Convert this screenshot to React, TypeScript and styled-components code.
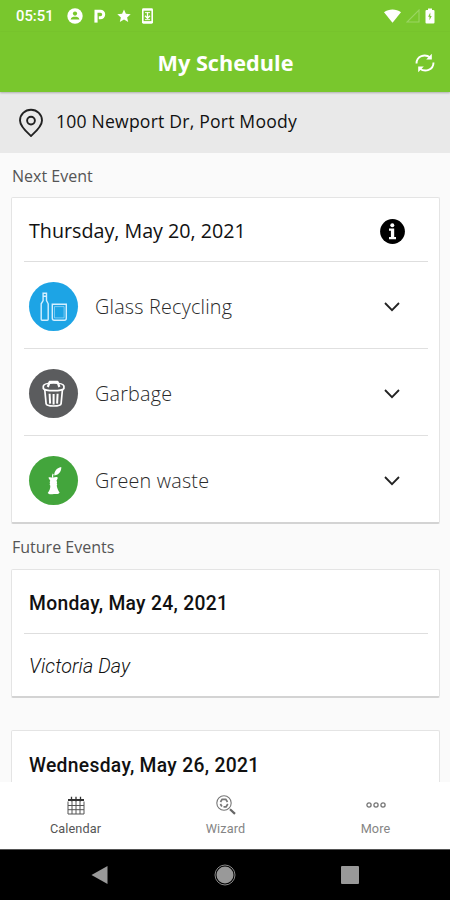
import React from 'react';
import styled, { createGlobalStyle } from 'styled-components';

const Global = createGlobalStyle`
  * { box-sizing: border-box; }
  body { margin: 0; background: #000; }
  svg { display: block; flex: none; }
`;

const openSans = '"Open Sans", "Noto Sans", sans-serif';
const roboto = 'Roboto, "Liberation Sans", sans-serif';

const Phone = styled.div`
  width: 450px;
  height: 900px;
  display: flex;
  flex-direction: column;
  overflow: hidden;
  background: #fafafa;
  font-family: ${openSans};
  color: #111;
`;

const StatusBar = styled.div`
  height: 32px;
  flex: none;
  display: flex;
  align-items: center;
  justify-content: space-between;
  padding: 0 15px 0 16px;
  background: #79c72d;
  color: #fff;
`;

const StatusGroup = styled.div<{ $gap: number }>`
  display: flex;
  align-items: center;
  gap: ${(p) => p.$gap}px;
`;

const Clock = styled.span`
  width: 40px;
  font: 500 14.8px/32px ${roboto};
  white-space: nowrap;
`;

const Header = styled.header`
  height: 60px;
  flex: none;
  display: grid;
  grid-template-columns: 50px 1fr 50px;
  align-items: center;
  background: #79c72d;
  color: #fff;
  box-shadow: 0 1px 2px rgba(0, 0, 0, 0.25);
  z-index: 1;
`;

const Title = styled.h1`
  grid-column: 2;
  margin: 0;
  padding: 1px 0 0 1px;
  text-align: center;
  font-size: 21.7px;
  line-height: 60px;
  font-weight: 700;
`;

const RefreshButton = styled.button`
  display: grid;
  place-items: center;
  height: 60px;
  padding: 0;
  border: 0;
  background: none;
  color: #fff;
`;

const AddressBar = styled.div`
  height: 61px;
  flex: none;
  display: flex;
  align-items: center;
  gap: 12px;
  padding: 0 18px;
  background: #e9e9e9;
`;

const Address = styled.span`
  font-size: 17.6px;
  letter-spacing: 0.2px;
  line-height: 24px;
  margin-top: -4px;
  white-space: nowrap;
`;

const Content = styled.main`
  flex: 1;
  min-height: 0;
  overflow: hidden;
  padding: 0 10px 0 11px;
`;

const SectionLabel = styled.h2<{ $height: number }>`
  margin: 0;
  padding-left: 1px;
  height: ${(p) => p.$height}px;
  font-size: 16px;
  line-height: 46px;
  font-weight: 400;
  color: #555;
`;

const Card = styled.section<{ $gap?: number }>`
  padding: 0 11px 0 12px;
  margin-bottom: ${(p) => p.$gap ?? 0}px;
  background: #fff;
  border: 1px solid #e4e4e4;
  border-bottom: 2px solid #d3d3d3;
  border-radius: 2px;
`;

const CardHead = styled.div<{ $offset?: number }>`
  height: 64px;
  display: flex;
  align-items: center;
  justify-content: space-between;
  padding: ${(p) => p.$offset ?? 3}px 23px 0 5px;
  border-bottom: 1px solid #dedede;
`;

const DateText = styled.span<{ $strong?: boolean }>`
  font: ${(p) => (p.$strong ? `500 19.3px/28px ${roboto}` : `400 19.7px/28px ${openSans}`)};
  letter-spacing: ${(p) => (p.$strong ? '0.3px' : '0')};
  white-space: nowrap;
`;

const WasteRow = styled.div`
  height: 87px;
  display: flex;
  align-items: center;
  padding: 3px 28px 0 5px;
  border-bottom: 1px solid #e0e0e0;
  &:last-child { height: 86px; border-bottom: 0; }
`;

const WasteBadge = styled.div<{ $color: string }>`
  width: 49px;
  height: 49px;
  border-radius: 50%;
  background: ${(p) => p.$color};
  display: grid;
  place-items: center;
  color: #fff;
`;

const WasteName = styled.span`
  flex: 1;
  padding-left: 17px;
  font-size: 19.8px;
  letter-spacing: 0.2px;
  line-height: 28px;
  font-weight: 340;
  color: #2a2a2a;
  white-space: nowrap;
`;

const Holiday = styled.div`
  height: 62px;
  padding: 3px 5px 0;
  overflow: hidden;
  font: italic 300 19.7px/60px ${roboto};
  letter-spacing: 0.1px;
`;

const TabBar = styled.nav`
  height: 67px;
  flex: none;
  display: grid;
  grid-template-columns: repeat(3, 1fr);
  background: #fff;
`;

const Tab = styled.div<{ $active?: boolean }>`
  display: flex;
  flex-direction: column;
  align-items: center;
  padding: 10px 0 0 1px;
  color: ${(p) => (p.$active ? '#555' : '#858585')};
`;

const TabIcon = styled.div`
  height: 26px;
  display: grid;
  place-items: center;
`;

const TabLabel = styled.span`
  font: 400 12.7px/22px ${roboto};
  letter-spacing: 0.1px;
`;

const SystemNav = styled.div`
  height: 51px;
  flex: none;
  display: flex;
  justify-content: space-between;
  align-items: center;
  padding: 0 91px;
  background: #000;
  border-top: 1px solid #555;
`;

const PersonIcon = () => (
  <svg width="16" height="16" viewBox="0 0 16 16">
    <circle cx="8" cy="8" r="7.7" fill="#fff" />
    <circle cx="8" cy="5.6" r="2.1" fill="#79c72d" />
    <path d="M3.6 11.4C4 9.2 6 8.7 8 8.7s4 .5 4.4 2.7z" fill="#79c72d" />
  </svg>
);

const ParkingIcon = () => (
  <svg width="12" height="16" viewBox="0 0 12 16">
    <path d="M2 14.6V7.8" stroke="#fff" strokeWidth="3.2" fill="none" />
    <path d="M2 8V3.2h4.4a3.3 3.3 0 0 1 0 6.6H4.8" stroke="#fff" strokeWidth="3" fill="none" />
  </svg>
);

const StarIcon = () => (
  <svg width="14" height="14" viewBox="0 0 14 14">
    <path d="M7 .4l1.900 4.400 4.800.400-3.600 3.200 1.100 4.700L7 10.600l-4.200 2.500 1.100-4.700L.3 5.200l4.800-.4z" fill="#fff" />
  </svg>
);

const UpdateIcon = () => (
  <svg width="11" height="16" viewBox="0 0 11 16">
    <rect x="0" y="0.3" width="11" height="15.4" rx="1.4" fill="#fff" />
    <rect x="1.6" y="2.7" width="7.8" height="10.4" fill="#79c72d" />
    <path d="M5.5 4.300v5.500M3 7.800l2.500 2.500L8 7.800" stroke="#fff" strokeWidth="1.300" fill="none" />
    <path d="M3 11.600h5M3 4.600h5" stroke="#fff" strokeWidth=".9" />
  </svg>
);

const WifiIcon = () => (
  <svg width="17" height="14" viewBox="0 0 17 14">
    <path d="M0 3.2C4.8-.4 12.2-.4 17 3.2L8.5 13.8z" fill="#fff" />
  </svg>
);

const SignalIcon = () => (
  <svg width="14" height="14" viewBox="0 0 14 14">
    <path d="M13 1v12H1z" fill="none" stroke="#9bd563" strokeWidth="1.1" />
  </svg>
);

const BatteryIcon = () => (
  <svg width="10" height="16" viewBox="0 0 10 16">
    <path d="M3 .5h4V2h1.400q1.100 0 1.100 1.100v11.300q0 1.100-1.100 1.100H1.600Q.5 15.500.5 14.400V3.100Q.5 2 1.600 2H3z" fill="#fff" />
    <path d="M5.300 4.500L3.100 8.700h1.400v3.500L6.700 7.900H5.300z" fill="#79c72d" />
  </svg>
);

const RefreshIcon = () => (
  <svg width="20" height="20" viewBox="0 0 20 20" fill="none" stroke="currentColor" strokeWidth="1.900">
    <path d="M1.500 10.500C1.500 3 10 .2 15.200 4.600" />
    <path d="M18.500 9.500C18.500 17 10 19.800 4.800 15.400" />
    <path d="M16.800.800v5.600h-5.600z" fill="currentColor" stroke="none" />
    <path d="M3.200 19.200v-5.600h5.600z" fill="currentColor" stroke="none" />
  </svg>
);

const PinIcon = () => (
  <svg width="26" height="30" viewBox="0 0 26 30" fill="none" stroke="#222" strokeWidth="1.900">
    <path d="M13 28C9.500 24.800 2 18.600 2 12.500a11 10.700 0 0 1 22 0C24 18.600 16.500 24.800 13 28z" strokeLinejoin="round" />
    <circle cx="13" cy="12.600" r="3.900" />
  </svg>
);

const InfoIcon = () => (
  <svg width="25" height="25" viewBox="0 0 25 25">
    <circle cx="12.500" cy="12.500" r="12.400" fill="#000" />
    <circle cx="12.300" cy="6.200" r="2" fill="#fff" />
    <path d="M9 9.600h5.200v8.500H16v2.200H9v-2.200h1.900v-6.300H9z" fill="#fff" />
  </svg>
);

const ChevronIcon = () => (
  <svg width="16" height="10" viewBox="0 0 16 10">
    <path d="M1 1l7 7.200L15 1" fill="none" stroke="#222" strokeWidth="1.800" />
  </svg>
);

const GlassIcon = () => (
  <svg width="49" height="49" viewBox="0 0 49 49" fill="none" stroke="#d5efff" strokeWidth="1.400">
    <path d="M14.100 11.300h3.400v7.200l1.700 3.300v15.500q0 .9-.9.900h-5.200q-.9 0-.9-.9V21.800l1.900-3.300zM14.100 14.300h3.400" />
    <path d="M23.300 22.300h14v14q0 1.900-1.900 1.900H25.200q-1.900 0-1.900-1.900z" />
    <path d="M25.500 24.600h9.600v11.300h-9.600z" strokeWidth=".5" />
  </svg>
);

const GarbageIcon = () => (
  <svg width="49" height="49" viewBox="0 0 49 49" fill="none" stroke="#fff" strokeWidth="1.700" strokeLinejoin="round">
    <path d="M14.300 17C15 14.800 19 14 24.600 14s9.600.8 10.300 3v2.500c-1 1.600-5 2.200-10.300 2.200s-9.300-.6-10.300-2.200z" />
    <path d="M15.800 21l1.300 13.600c.4 3.200 14.600 3.200 15 0L33.400 21" />
    <path d="M20.600 24.800l.5 9.800M24.600 25v10.500M28.600 24.800l-.5 9.800" strokeWidth="2" />
    <path d="M18.800 18l1.900-5.200h7.800l1.900 5.200" strokeWidth="2.200" />
  </svg>
);

const AppleCoreIcon = () => (
  <svg width="49" height="49" viewBox="0 0 49 49" fill="#fff">
    <path d="M19.500 21.600c1.500-.9 3 0 4.600-.1 1.700-.1 3.100-1 4.600.1.100 1.400-.9 2.300-1.300 3.500.9.600.9 1.500.2 2.200.7.700.8 1.500.1 2.300.500 2.800 1.400 4.900 2.900 7-1.300 2.200-3.300 1.300-5.600 1.300s-4.700 1-6.300-1c1.900-2 2.600-4.500 2.600-7.200-.800-.800-.8-1.600-.1-2.400-.700-.7-.6-1.600.1-2.300-.400-1.200-1.600-2-1.800-3.400z" />
    <path d="M23.600 21.600c-.2-1.600 0-2.700.6-3.700" stroke="#fff" strokeWidth="1.200" fill="none" />
    <path d="M25.300 19.500c-.3-4 2-7.600 7-8.600.1 4-2 7.600-7 8.600z" />
  </svg>
);

const CalendarIcon = () => (
  <svg width="18" height="19" viewBox="0 0 18 19" fill="none" stroke="#555" strokeWidth="1">
    <path d="M1 5.500v12.500h16V5.500M1 9.500h16M1 13.700h16M5 5v13M9 5v13M13 5v13" />
    <path d="M1 4h16" stroke="#333" strokeWidth="2" />
    <path d="M4.500.800v4.500M9 .8v4.500M13.500.800v4.500" stroke="#333" strokeWidth="1.300" />
  </svg>
);

const WizardIcon = () => (
  <svg width="20" height="20" viewBox="0 0 20 20" fill="none" stroke="#777" strokeWidth="1.100">
    <circle cx="8" cy="8" r="7.200" />
    <path d="M4.500 7l1.600-2.700h3.700L11.500 7M11.800 9l-1.700 2.800H7.500M5.900 11.500L4.400 9" strokeWidth="1.700" />
    <path d="M14 14.200l5 4.700" stroke="#666" strokeWidth="2.200" />
  </svg>
);

const MoreIcon = () => (
  <svg width="20" height="6" viewBox="0 0 20 6" fill="none" stroke="#777" strokeWidth="1.300">
    <circle cx="3" cy="3" r="2.100" />
    <circle cx="10" cy="3" r="2.100" />
    <circle cx="17" cy="3" r="2.100" />
  </svg>
);

const pickups = [
  { name: 'Glass Recycling', color: '#1da4e5', icon: <GlassIcon /> },
  { name: 'Garbage', color: '#5b5c5e', icon: <GarbageIcon /> },
  { name: 'Green waste', color: '#43a53c', icon: <AppleCoreIcon /> },
];

export default function App() {
  return (
    <Phone>
      <Global />
      <StatusBar>
        <StatusGroup $gap={11}>
          <Clock>05:51</Clock>
          <PersonIcon />
          <ParkingIcon />
          <StarIcon />
          <UpdateIcon />
        </StatusGroup>
        <StatusGroup $gap={5}>
          <WifiIcon />
          <SignalIcon />
          <BatteryIcon />
        </StatusGroup>
      </StatusBar>
      <Header>
        <Title>My Schedule</Title>
        <RefreshButton aria-label="Refresh"><RefreshIcon /></RefreshButton>
      </Header>
      <AddressBar>
        <PinIcon />
        <Address>100 Newport Dr, Port Moody</Address>
      </AddressBar>
      <Content>
        <SectionLabel $height={44}>Next Event</SectionLabel>
        <Card>
          <CardHead>
            <DateText>Thursday, May 20, 2021</DateText>
            <InfoIcon />
          </CardHead>
          {pickups.map((p) => (
            <WasteRow key={p.name}>
              <WasteBadge $color={p.color}>{p.icon}</WasteBadge>
              <WasteName>{p.name}</WasteName>
              <ChevronIcon />
            </WasteRow>
          ))}
        </Card>
        <SectionLabel $height={45}>Future Events</SectionLabel>
        <Card $gap={32}>
          <CardHead $offset={4}><DateText $strong>Monday, May 24, 2021</DateText></CardHead>
          <Holiday>Victoria Day</Holiday>
        </Card>
        <Card>
          <CardHead $offset={7}><DateText $strong>Wednesday, May 26, 2021</DateText></CardHead>
        </Card>
      </Content>
      <TabBar>
        <Tab $active><TabIcon><CalendarIcon /></TabIcon><TabLabel>Calendar</TabLabel></Tab>
        <Tab><TabIcon><WizardIcon /></TabIcon><TabLabel>Wizard</TabLabel></Tab>
        <Tab><TabIcon><MoreIcon /></TabIcon><TabLabel>More</TabLabel></Tab>
      </TabBar>
      <SystemNav>
        <svg width="17" height="20" viewBox="0 0 17 20"><path d="M16.500 1v18L.5 10z" fill="#999" /></svg>
        <svg width="22" height="22" viewBox="0 0 22 22"><circle cx="11" cy="11" r="8.500" fill="#999" /><circle cx="11" cy="11" r="10" fill="none" stroke="#888" /></svg>
        <svg width="18" height="18" viewBox="0 0 18 18"><rect width="18" height="18" rx="1" fill="#999" /></svg>
      </SystemNav>
    </Phone>
  );
}
